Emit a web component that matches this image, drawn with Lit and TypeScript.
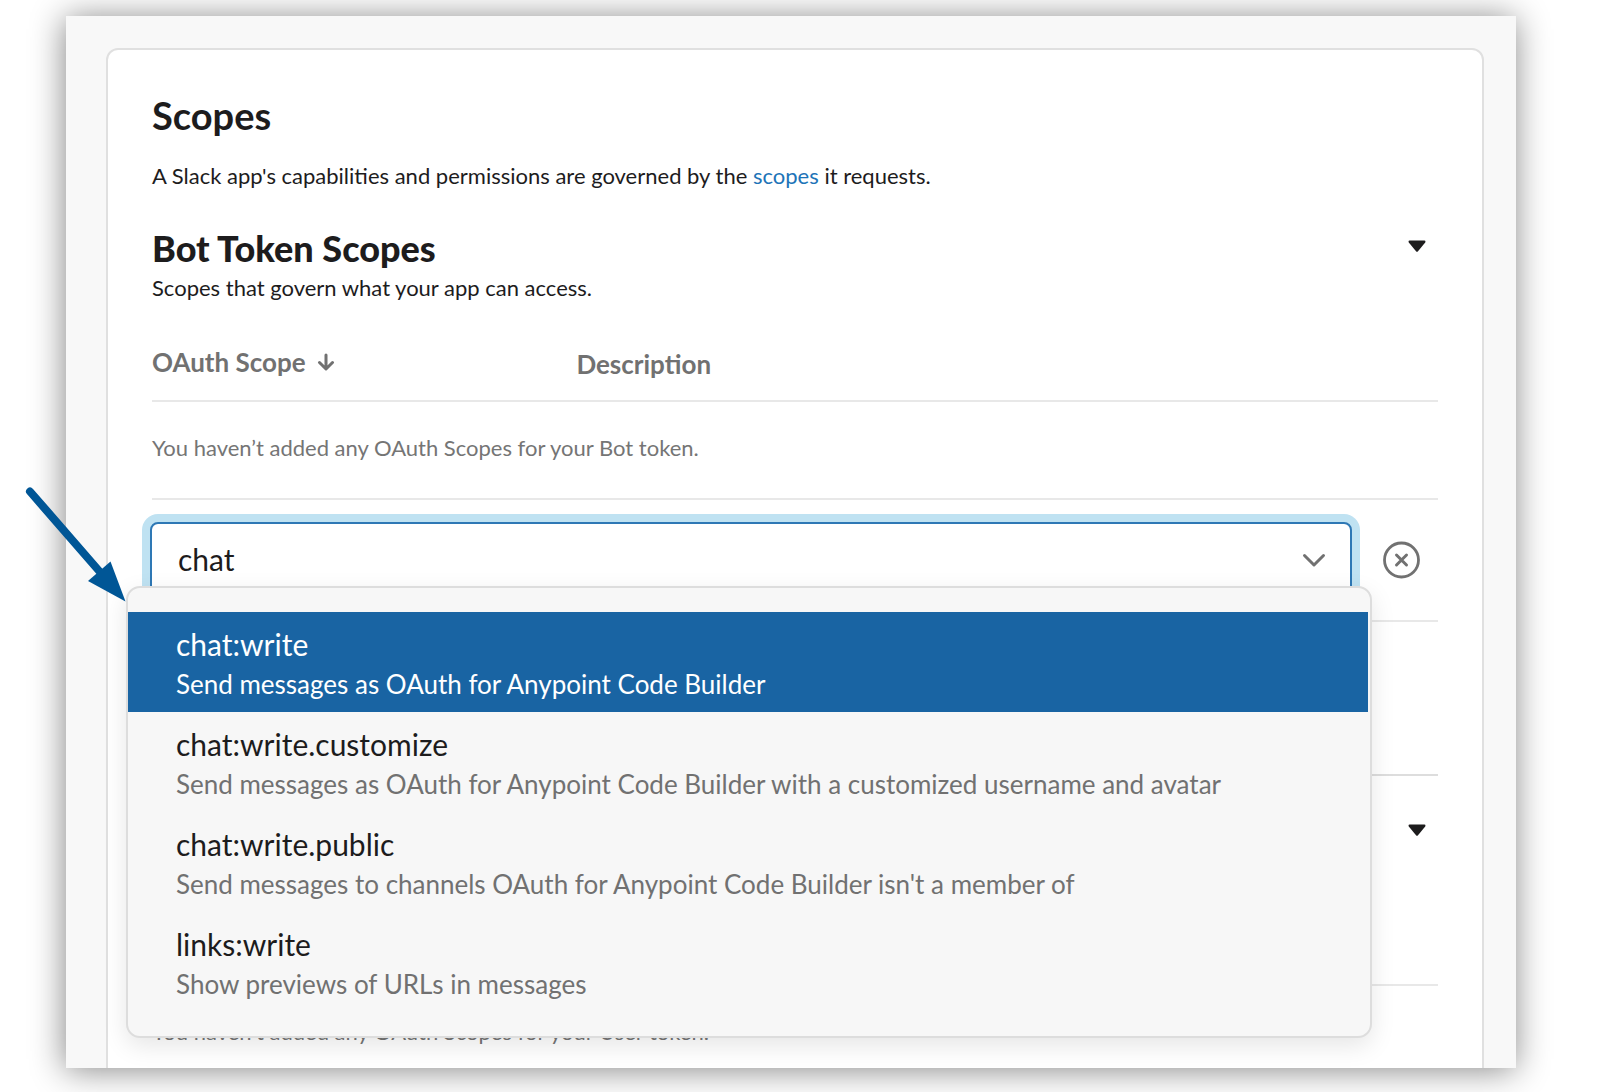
import { LitElement, html, css, svg, nothing } from "lit";
import { customElement, property, state } from "lit/decorators.js";
import { classMap } from "lit/directives/class-map.js";

interface ScopeOption {
  name: string;
  description: string;
}

const OPTIONS: ScopeOption[] = [
  { name: "chat:write", description: "Send messages as OAuth for Anypoint Code Builder" },
  {
    name: "chat:write.customize",
    description: "Send messages as OAuth for Anypoint Code Builder with a customized username and avatar",
  },
  {
    name: "chat:write.public",
    description: "Send messages to channels OAuth for Anypoint Code Builder isn't a member of",
  },
  { name: "links:write", description: "Show previews of URLs in messages" },
];

/* Text box with a list of matching scopes below it. */
@customElement("scope-picker")
export class ScopePicker extends LitElement {
  @property() value = "";
  @property({ attribute: false }) options: ScopeOption[] = [];
  @state() private active = 0;

  static styles = css`
    :host {
      display: block;
      position: relative;
    }
    .box {
      display: flex;
      align-items: center;
      box-sizing: border-box;
      height: 76px;
      padding: 0 24px 0 26px;
      border: 2px solid #2e78b5;
      border-radius: 8px;
      background: #fff;
      box-shadow: 0 0 0 8px #bfe2f2;
    }
    .input {
      flex: 1;
      min-width: 0;
      height: 40px;
      padding: 0 0 2px;
      border: 0;
      outline: 0;
      background: transparent;
      color: #1d1c1d;
      font: 30px/40px Lato, sans-serif;
    }
    .chevron {
      display: block;
      flex: none;
    }
    .menu {
      position: absolute;
      z-index: 1;
      top: 64px;
      left: -24px;
      right: -20px;
      padding: 24px 2px 24px 0;
      border: 2px solid #dddddd;
      border-radius: 14px;
      background: #f7f7f7;
      box-shadow: 0 8px 24px rgba(0, 0, 0, 0.1);
    }
    .option {
      display: block;
      width: 100%;
      padding: 12px 48px 8px;
      border: 0;
      background: transparent;
      text-align: left;
      color: #1d1c1d;
      font: 30px/40px Lato, sans-serif;
      cursor: pointer;
    }
    .name,
    .description {
      display: block;
    }
    .description {
      font-size: 26px;
      color: #717171;
    }
    .option.active,
    .option.active .description {
      background: #1964a3;
      color: #fff;
    }
  `;

  render() {
    return html`
      <div class="box">
        <input
          class="input"
          type="text"
          role="combobox"
          aria-label="OAuth Scope"
          aria-expanded="true"
          aria-controls="menu"
          .value=${this.value}
        />
        <svg class="chevron" width="24" height="16" viewBox="0 0 24 16" aria-hidden="true">
          <path d="M2.500 3.500 L12 13 L21.500 3.500" fill="none" stroke="#717171" stroke-width="3" stroke-linecap="round" stroke-linejoin="round" />
        </svg>
      </div>
      <div class="menu" id="menu" role="listbox" aria-label="Matching scopes">
        ${this.options.map(
          (option, index) => html`
            <button
              type="button"
              role="option"
              aria-selected=${index === this.active ? "true" : "false"}
              class=${classMap({ option: true, active: index === this.active })}
              @mouseenter=${() => (this.active = index)}
            >
              <span class="name">${option.name}</span>
              <span class="description">${option.description}</span>
            </button>
          `
        )}
      </div>
    `;
  }
}

@customElement("token-scopes")
export class TokenScopes extends LitElement {
  @property() heading = "";
  @property() summary = "";
  @property() empty = "";
  @property({ type: Boolean }) adding = false;
  @property({ type: Boolean }) covered = false;

  static styles = css`
    :host {
      display: block;
      margin-top: 32px;
    }
    .head {
      display: flex;
      justify-content: space-between;
      align-items: flex-start;
    }
    .heading {
      margin: 0;
      font-size: 36px;
      line-height: 48px;
      font-weight: 900;
    }
    .summary {
      margin: 0;
      font-size: 22px;
      line-height: 32px;
    }
    .toggle,
    .clear,
    .sort {
      padding: 0;
      border: 0;
      background: transparent;
      color: inherit;
      font: inherit;
      cursor: pointer;
    }
    .toggle {
      padding: 16px 12px;
    }
    .toggle svg,
    .clear svg {
      display: block;
    }
    .table {
      width: 100%;
      margin-top: 44px;
      border-collapse: separate;
      border-spacing: 0;
      table-layout: fixed;
    }
    .column {
      padding: 0 0 20px;
      border-bottom: 2px solid #e8e8e8;
      text-align: left;
      vertical-align: top;
      font-size: 26px;
      line-height: 32px;
      font-weight: 700;
      color: #717171;
    }
    .scope-column {
      width: 33%;
    }
    .sort {
      display: flex;
      align-items: center;
      gap: 11px;
      line-height: 28px;
    }
    .empty {
      padding: 30px 0 34px;
      border-bottom: 2px solid #e8e8e8;
      font-size: 22px;
      line-height: 32px;
      color: #757575;
    }
    .add-row {
      display: flex;
      align-items: center;
      gap: 30px;
      padding: 22px 18px 22px 0;
      border-bottom: 2px solid #e8e8e8;
    }
    .picker {
      flex: 1;
      margin-left: -2px;
    }
    .foot {
      padding: 48px 0;
      border-bottom: 2px solid #dddddd;
    }
    .add {
      display: block;
      box-sizing: border-box;
      visibility: hidden;
      width: 240px;
      height: 56px;
      border: 2px solid #dddddd;
      border-radius: 8px;
      background: #fff;
    }
    .covered .heading,
    .covered .summary,
    .covered .label {
      visibility: hidden;
    }
  `;

  private label(text: string) {
    return this.covered ? html`<span class="label">&nbsp;</span>` : html`<span class="label">${text}</span>`;
  }

  render() {
    return html`
      <section class=${classMap({ covered: this.covered })} aria-label=${this.heading}>
        <div class="head">
          <div>
            <h3 class="heading">${this.label(this.heading)}</h3>
            <p class="summary">${this.label(this.summary)}</p>
          </div>
          <button class="toggle" type="button" aria-label="Collapse ${this.heading}" aria-expanded="true">
            <svg width="18" height="12" viewBox="0 0 18 12" aria-hidden="true">
              <path d="M1.6 .5 H16.4 Q18 .8 17.2 2.6 L10 11.2 Q9 12.2 8 11.2 L.8 2.6 Q0 .8 1.6 .5 Z" fill="#1d1c1d" />
            </svg>
          </button>
        </div>
        <table class="table">
          <thead>
            <tr>
              <th class="column scope-column" scope="col" aria-sort="descending">
                <button class="sort" type="button" aria-label="OAuth Scope">
                  ${this.label("OAuth Scope")}
                  <svg width="18" height="18" viewBox="0 0 18 18" aria-hidden="true">
                    <path d="M9 2 V15 M2.500 9.500 L9 16 L15.500 9.500" fill="none" stroke="#717171" stroke-width="3" stroke-linecap="round" stroke-linejoin="round" />
                  </svg>
                </button>
              </th>
              <th class="column" scope="col">${this.label("Description")}</th>
            </tr>
          </thead>
          <tbody>
            <tr>
              <td class="empty" colspan="2">${this.empty}</td>
            </tr>
          </tbody>
        </table>
        ${this.adding
          ? html`
              <div class="add-row">
                <scope-picker class="picker" value="chat" .options=${OPTIONS}></scope-picker>
                <button class="clear" type="button" aria-label="Remove scope">
                  <svg width="38" height="38" viewBox="0 0 38 38" aria-hidden="true">
                    <circle cx="19.500" cy="19" r="17" fill="none" stroke="#717171" stroke-width="2.8" />
                    <path d="M14.500 14 L24.500 24 M24.500 14 L14.500 24" stroke="#717171" stroke-width="3" stroke-linecap="round" />
                  </svg>
                </button>
              </div>
              <div class="foot">
                <button class="add" type="button" aria-label="Add an OAuth Scope"></button>
              </div>
            `
          : nothing}
      </section>
    `;
  }
}

@customElement("app-root")
export class AppRoot extends LitElement {
  static styles = css`
    :host {
      display: flex;
      position: relative;
      box-sizing: border-box;
      height: 100vh;
      overflow: hidden;
      padding: 16px 106px 24px 66px;
      background: #fff;
      color: #1d1c1d;
      font-family: Lato, sans-serif;
    }
    .sheet {
      flex: 1;
      min-width: 0;
      position: relative;
      background: #f8f8f8;
      box-shadow: -1px 2px 32px rgba(0, 0, 0, 0.48);
    }
    .clip {
      height: 100%;
      box-sizing: border-box;
      overflow: hidden;
      padding: 32px 32px 0 40px;
    }
    .card {
      padding: 42px 44px;
      border: 2px solid #e0e0e0;
      border-radius: 12px;
      background: #fff;
    }
    .title {
      margin: 0;
      font-size: 38px;
      line-height: 46px;
      font-weight: 700;
    }
    .lead {
      margin: 22px 0 0;
      font-size: 22px;
      line-height: 32px;
    }
    .link {
      color: #1d74b8;
      text-decoration: none;
    }
    .pointer {
      position: absolute;
      z-index: 2;
      left: 24px;
      top: 484px;
      pointer-events: none;
    }
  `;

  render() {
    return html`
      <main class="sheet">
        <div class="clip">
          <div class="card">
            <h2 class="title">Scopes</h2>
            <p class="lead">
              A Slack app's capabilities and permissions are governed by the
              <a class="link" href="#scopes">scopes</a> it requests.
            </p>
            <token-scopes
              heading="Bot Token Scopes"
              summary="Scopes that govern what your app can access."
              empty="You haven’t added any OAuth Scopes for your Bot token."
              adding
            ></token-scopes>
            <token-scopes
              heading="User Token Scopes"
              empty="You haven’t added any OAuth Scopes for your User token."
              covered
            ></token-scopes>
          </div>
        </div>
      </main>
      <svg class="pointer" width="104" height="120" viewBox="0 0 104 120" aria-hidden="true">
        ${svg`
          <path d="M6 7.500 L76 88" stroke="#005696" stroke-width="8" stroke-linecap="round" />
          <path d="M101.500 117.500 L86.500 77.500 L64 97 Z" fill="#005696" />
        `}
      </svg>
    `;
  }
}
